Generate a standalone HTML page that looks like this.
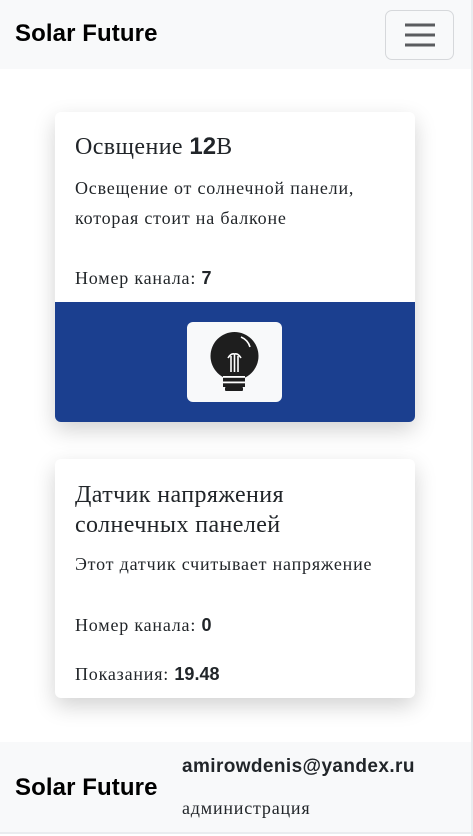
<!DOCTYPE html>
<html><head><meta charset="utf-8">
<style>
*{margin:0;padding:0;box-sizing:border-box}
html,body{width:473px;height:836px;overflow:hidden;background:#fff}
body{position:relative;font-family:"Liberation Serif",serif;color:#212529}
.sb{position:absolute;right:0;top:0;width:2px;height:836px;background:#e9ecef}
.nav{position:absolute;left:0;top:0;width:471px;height:69px;background:#f8f9fa}
.brand{position:absolute;font-family:"Liberation Sans",sans-serif;font-weight:bold;font-size:24px;color:#000;letter-spacing:0.1px}
.tog{position:absolute;left:385px;top:10px;width:69px;height:50px;border:1px solid #d6d8db;border-radius:7px}
.card{position:absolute;left:55px;width:360px;background:#fff;border-radius:6px;box-shadow:0 8px 22px rgba(0,0,0,0.18);overflow:hidden}
.t{position:absolute;left:20px;font-size:24px;line-height:30px;letter-spacing:0.4px;color:#212529;white-space:nowrap}
.p{position:absolute;left:20px;font-size:18px;line-height:30px;letter-spacing:0.8px;color:#212529;white-space:nowrap}
.b{font-family:"Liberation Sans",sans-serif;font-weight:bold;letter-spacing:0}
.blue{position:absolute;left:0;top:190px;width:360px;height:120px;background:#1b3f8f}
.ib{position:absolute;left:132px;top:20px;width:95px;height:80px;background:#f8f9fa;border-radius:6px}
.foot{position:absolute;left:0;top:742px;width:471px;height:92px;background:#f8f9fa;border-bottom:2px solid #e9ecef}
</style></head><body>
<div class="sb"></div>
<div class="nav">
<div class="brand" style="left:15px;top:20px">Solar Future</div>
<div class="tog"><svg width="69" height="50" viewBox="0 0 69 50"><g stroke="#5a5c5f" stroke-width="3"><line x1="19" y1="14" x2="49" y2="14"/><line x1="19" y1="24" x2="49" y2="24"/><line x1="19" y1="34" x2="49" y2="34"/></g></svg></div>
</div>

<div class="card" style="top:112px;height:310px">
<div class="t" style="top:20px">Освщение <span class="b">12</span>В</div>
<div class="p" style="top:61px">Освещение от солнечной панели,<br>которая стоит на балконе</div>
<div class="p" style="top:151px">Номер канала: <span class="b">7</span></div>
<div class="blue"><div class="ib">
<svg width="95" height="80" viewBox="0 0 95 80">
<circle cx="47.5" cy="34" r="24" fill="#1e1e1e"/>
<rect x="36" y="50" width="22" height="18" fill="#1e1e1e"/>
<path d="M54 15 Q61 18 63 25" stroke="#fff" stroke-width="1.6" fill="none"/>
<path d="M41 36 Q44 31 47.5 32 Q51 31 54 36" stroke="#fff" stroke-width="1.6" fill="none"/>
<path d="M44 34 V50 M47.5 32 V50 M51 34 V50" stroke="#fff" stroke-width="1.6" fill="none"/>
<rect x="36" y="54" width="22" height="1.8" fill="#fff"/>
<rect x="36" y="59.5" width="22" height="1.8" fill="#fff"/>
<rect x="36" y="65" width="22" height="3" fill="#f8f9fa"/>
<rect x="38" y="65" width="18" height="4" rx="1" fill="#1e1e1e"/>
</svg></div></div>
</div>

<div class="card" style="top:459px;height:239px">
<div class="t" style="top:21px">Датчик напряжения<br>солнечных панелей</div>
<div class="p" style="top:90px">Этот датчик считывает напряжение</div>
<div class="p" style="top:151px">Номер канала: <span class="b">0</span></div>
<div class="p" style="top:200px">Показания: <span class="b">19.48</span></div>
</div>

<div class="foot">
<div class="brand" style="left:15px;top:32px">Solar Future</div>
<div class="b" style="position:absolute;left:182px;top:14px;font-size:19px;letter-spacing:0.4px;color:#212529">amirowdenis@yandex.ru</div>
<div style="position:absolute;left:182px;top:56px;font-size:18px;letter-spacing:0.8px;color:#212529">администрация</div>
</div>
</body></html>
